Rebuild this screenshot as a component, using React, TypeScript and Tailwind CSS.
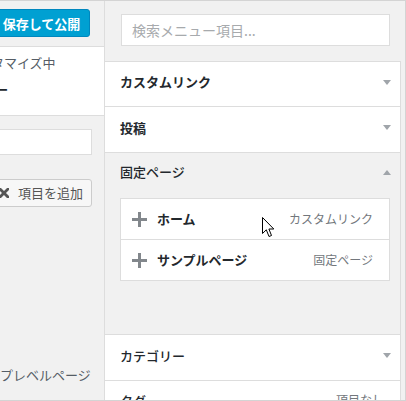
import React from "react";

const font = { fontFamily: '"Noto Sans CJK JP", "Noto Sans", sans-serif' };

function Down() {
  return (
    <svg width="8" height="5" viewBox="0 0 8 5" className="shrink-0">
      <polygon points="0,0 8,0 4,5" fill="#a0a5aa" />
    </svg>
  );
}
function Up() {
  return (
    <svg width="8" height="5" viewBox="0 0 8 5" className="shrink-0">
      <polygon points="0,5 8,5 4,0" fill="#a0a5aa" />
    </svg>
  );
}
function Plus() {
  return (
    <svg width="15" height="15" viewBox="0 0 15 15" className="shrink-0">
      <rect x="6" y="0" width="3" height="15" fill="#82878c" />
      <rect x="0" y="6" width="15" height="3" fill="#82878c" />
    </svg>
  );
}

export default function App() {
  return (
    <div
      className="relative w-[406px] h-[401px] overflow-hidden bg-[#f1f1f1] border-t border-r border-b border-[#d4d4d4] flex text-[#23282d]"
      style={font}
    >
      {/* Left panel */}
      <div className="w-[105px] shrink-0 h-full overflow-hidden flex flex-col border-r border-[#dddddd]">
        <div className="mt-[8px] -ml-[7px] w-[97px] h-[28px] shrink-0 rounded-[3px] bg-[#00a0d2] border border-[#0087be] text-white text-[13px] font-bold flex items-center justify-center leading-none">
          保存して公開
        </div>
        <div className="mt-[9px] h-[70px] shrink-0 bg-white border-y border-[#dddddd] flex flex-col pt-[7px]">
          <div className="text-[13px] leading-[18px] text-[#555d66] -ml-[35px] whitespace-nowrap">カスタマイズ中</div>
          <div className="text-[20px] leading-[26px] mt-[5px] -ml-[71px] whitespace-nowrap">メニュー</div>
        </div>
        <div className="mt-[13px] shrink-0 -ml-[10px] w-[102px] h-[26px] bg-white border border-[#dddddd]" />
        <div className="mt-[24px] shrink-0 -ml-[10px] w-[102px] h-[28px] rounded-[3px] bg-[#f7f7f7] border border-[#cccccc] flex items-center text-[13px] text-[#555555] whitespace-nowrap">
          <svg width="10" height="10" viewBox="0 0 10 10" className="ml-[8px] shrink-0">
            <path d="M1 1 L9 9 M9 1 L1 9" stroke="#555555" strokeWidth="2.8" strokeLinecap="square" />
          </svg>
          <span className="ml-[9px]">項目を追加</span>
        </div>
        <div className="mt-auto mb-[15px] -ml-[26px] text-[13px] leading-[20px] text-[#555d66] whitespace-nowrap">
          トップレベルページ
        </div>
      </div>

      {/* Right panel */}
      <div className="flex-1 h-full flex flex-col overflow-hidden">
        <div className="h-[60px] shrink-0 flex items-start pt-[13px] pl-[16px]">
          <div className="w-[269px] h-[32px] bg-white border border-[#dddddd] flex items-center pl-[10px] text-[14px] text-[#a7aaad] whitespace-nowrap">
            検索メニュー項目...
          </div>
        </div>
        <div className="w-[296px] shrink-0 border-t border-r border-[#dddddd] flex flex-col">
          <div className="h-[45px] bg-white border-b border-[#dddddd] flex items-center justify-between pl-[15px] pr-[9px] pb-[4px]">
            <span className="text-[13px] font-bold">カスタムリンク</span>
            <Down />
          </div>
          <div className="h-[46px] bg-white border-b border-[#dddddd] flex items-center justify-between pl-[15px] pr-[9px] pb-[4px]">
            <span className="text-[13px] font-bold">投稿</span>
            <Down />
          </div>
          <div className="h-[182px] bg-[#f1f1f1] border-b border-[#dddddd] flex flex-col">
            <div className="h-[40px] flex items-center justify-between pl-[15px] pr-[9px] pb-[2px]">
              <span className="text-[13px] font-medium">固定ページ</span>
              <Up />
            </div>
            <div className="mt-[5px] ml-[15px] w-[270px] bg-white border border-[#dddddd] flex flex-col">
              <div className="h-[41px] border-b border-[#dddddd] flex items-center pl-[11px] pr-[16px]">
                <Plus />
                <span className="ml-[10px] text-[13px] font-bold">ホーム</span>
                <span className="ml-auto text-[12px] text-[#72777c]">カスタムリンク</span>
              </div>
              <div className="h-[40px] flex items-center pl-[11px] pr-[16px]">
                <Plus />
                <span className="ml-[10px] text-[13px] font-bold">サンプルページ</span>
                <span className="ml-auto text-[12px] text-[#72777c]">固定ページ</span>
              </div>
            </div>
          </div>
          <div className="h-[46px] bg-white border-b border-[#dddddd] flex items-center justify-between pl-[15px] pr-[9px] pb-[4px]">
            <span className="text-[13px] font-medium">カテゴリー</span>
            <Down />
          </div>
          <div className="h-[46px] bg-white flex items-start justify-between pl-[15px] pr-[16px] pt-[10px]">
            <span className="text-[13px] font-medium">タグ</span>
            <span className="text-[12px] text-[#72777c]">項目なし</span>
          </div>
        </div>
      </div>

      {/* Cursor */}
      <svg
        width="13"
        height="22"
        viewBox="0 0 13 22"
        className="absolute left-[262px] top-[216px]"
      >
        <path
          d="M0.5 0.5 L0.5 16.5 L4.3 12.8 L7 19.5 L9.5 18.5 L6.9 12 L11.8 12 Z"
          fill="#ffffff"
          stroke="#000000"
          strokeWidth="1"
          strokeLinejoin="miter"
        />
      </svg>
    </div>
  );
}
